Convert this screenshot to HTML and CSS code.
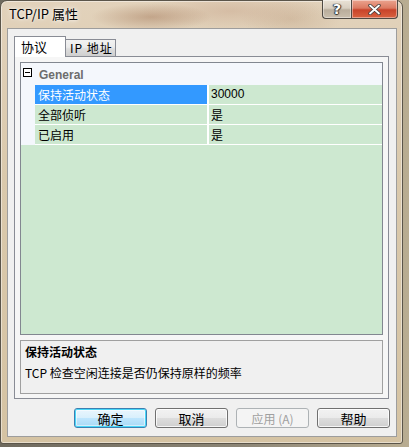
FILE: index.html
```html
<!DOCTYPE html>
<html lang="zh-CN">
<head>
  <meta charset="UTF-8" />
  <title>TCP/IP 属性</title>
  <link rel="stylesheet" href="styles.css">
</head>
<body>
  <div class="window">
    <div class="titlebar">
      <span class="title">TCP/IP 属性</span>
      <div class="caption-buttons">
        <div class="cap-btn help">?</div>
        <div class="cap-btn close">
          <svg width="13" height="11" viewBox="0 0 13 11">
            <path d="M2 1.5 L11 9.5 M11 1.5 L2 9.5" stroke="#3c3c3c" stroke-width="3.4" stroke-linecap="round"/>
            <path d="M2 1.5 L11 9.5 M11 1.5 L2 9.5" stroke="#fff" stroke-width="1.8" stroke-linecap="round"/>
          </svg>
        </div>
      </div>
    </div>

    <div class="client">
      <div class="tabs">
        <div class="tab active">协议</div>
        <div class="tab">IP 地址</div>
      </div>

      <div class="panel">
        <div class="grid">
          <div class="category">
            <span class="toggle"></span>
            <span class="cat-name">General</span>
          </div>
          <div class="row selected">
            <div class="name">保持活动状态</div>
            <div class="value">30000</div>
          </div>
          <div class="row">
            <div class="name">全部侦听</div>
            <div class="value">是</div>
          </div>
          <div class="row">
            <div class="name">已启用</div>
            <div class="value">是</div>
          </div>
          <div class="grid-fill"></div>
        </div>

        <div class="description">
          <div class="desc-title">保持活动状态</div>
          <div class="desc-text">TCP 检查空闲连接是否仍保持原样的频率</div>
        </div>
      </div>

      <div class="buttons">
        <button class="btn default">确定</button>
        <button class="btn">取消</button>
        <button class="btn disabled">应用 (A)</button>
        <button class="btn">帮助</button>
      </div>
    </div>
  </div>
</body>
</html>
```

FILE: styles.css
```css
body {
  margin: 0;
  padding: 0;
  width: 409px;
  height: 447px;
  overflow: hidden;
  background: linear-gradient(90deg, #6f6a5e 0%, #8d8676 60%, #b9ad92 100%);
  font-family: "Noto Sans CJK SC", "Liberation Sans", sans-serif;
  font-size: 12px;
  color: #000;
}

.window {
  border: 1px solid #5b554a;
  border-radius: 7px 7px 3px 3px;
  background:
    radial-gradient(ellipse 60px 14px at 150px 16px, rgba(170, 130, 100, 0.55), transparent),
    radial-gradient(ellipse 90px 18px at 230px 10px, rgba(205, 175, 150, 0.6), transparent),
    radial-gradient(ellipse 50px 20px at 290px 18px, rgba(190, 160, 130, 0.4), transparent),
    linear-gradient(180deg, #e2d2bb 0%, #dac9ac 40%, #d5c3a3 100%);
  box-shadow: inset 0 0 0 1px rgba(255, 255, 255, 0.45);
  display: flex;
  flex-direction: column;
  padding: 0 5px 6px 6px;
  box-sizing: border-box;
  width: 403px;
  height: 444px;
}

.titlebar {
  height: 27px;
  display: flex;
  align-items: flex-start;
  justify-content: space-between;
}

.title {
  margin: 5px 0 0 2px;
  font-size: 13px;
  line-height: 16px;
  text-shadow: 0 0 6px rgba(255, 255, 255, 0.9), 0 0 3px rgba(255, 255, 255, 0.9);
}

.caption-buttons {
  display: flex;
  margin-top: -1px;
  margin-right: -1px;
}

.cap-btn {
  height: 19px;
  border: 1px solid #4f4a44;
  border-top: none;
  box-sizing: border-box;
  display: flex;
  align-items: center;
  justify-content: center;
  box-shadow: inset 0 0 0 1px rgba(255, 255, 255, 0.4);
}

.help {
  width: 29px;
  border-right: none;
  border-radius: 0 0 0 4px;
  background: linear-gradient(180deg, #eae2d6 0%, #d9cfc1 45%, #b9ad9c 55%, #c9bead 100%);
  color: #fff;
  font-family: "DejaVu Sans", sans-serif;
  font-weight: bold;
  font-size: 14px;
  text-shadow: 0 0 1px #333, 1px 0 1px #333, -1px 0 1px #333, 0 1px 1px #333;
}

.close {
  width: 47px;
  border-radius: 0 0 4px 0;
  background: linear-gradient(180deg, #eba48f 0%, #dc7a62 45%, #c8432a 55%, #d9623f 100%);
}

.client {
  flex: 1;
  background: #f0f0f0;
  border: 1px solid #9d9d9d;
  display: flex;
  flex-direction: column;
  padding: 7px 6px 0 6px;
}

.tabs {
  display: flex;
  align-items: flex-end;
  height: 20px;
  position: relative;
  z-index: 1;
}

.tab {
  height: 17px;
  width: 50px;
  box-sizing: border-box;
  border: 1px solid #898c95;
  border-bottom: none;
  border-left: none;
  background: linear-gradient(180deg, #f2f2f2 0%, #ebebeb 45%, #dddddd 55%, #cfcfcf 100%);
  font-size: 12px;
  line-height: 16px;
  padding-left: 4px;
  letter-spacing: 1px;
  white-space: nowrap;
}

.tab.active {
  height: 21px;
  width: 52px;
  margin-bottom: -1px;
  border-left: 1px solid #898c95;
  background: #fff;
  font-size: 13px;
  line-height: 20px;
  padding-left: 6px;
  letter-spacing: 0;
}

.panel {
  width: 375px;
  height: 343px;
  box-sizing: border-box;
  border: 1px solid #898c95;
  background: #f6f6f6;
  padding: 5px 5px 4px 5px;
  display: flex;
  flex-direction: column;
  gap: 5px;
}

.grid {
  height: 273px;
  box-sizing: border-box;
  border: 1px solid #828790;
  background: #f4f7fc;
  display: flex;
  flex-direction: column;
}

.category {
  height: 22px;
  display: flex;
  align-items: center;
}

.toggle {
  width: 9px;
  height: 9px;
  border: 1px solid #000;
  box-sizing: border-box;
  margin: -3px 0 0 2px;
  position: relative;
  background: #fff;
}

.toggle::after {
  content: "";
  position: absolute;
  left: 1px;
  top: 3px;
  width: 5px;
  height: 1px;
  background: #000;
}

.cat-name {
  margin-left: 7px;
  font-family: "Liberation Sans", sans-serif;
  font-weight: bold;
  font-size: 12px;
  color: #6d6d6d;
  margin-top: 1px;
}

.row {
  height: 19px;
  display: flex;
  margin-left: 14px;
  border-bottom: 1px solid #fff;
}

.row .name,
.row .value {
  background: #cde8d0;
  line-height: 19px;
  padding-left: 3px;
}

.row .name {
  width: 169px;
  border-right: 2px solid #fff;
}

.row .value {
  flex: 1;
  padding-left: 2px;
}

.row.selected .name {
  background: #3399ff;
  color: #fff;
}

.row.selected .value {
  font-family: "Liberation Sans", sans-serif;
}

.grid-fill {
  flex: 1;
  background: #cde8d0;
}

.description {
  flex: 1;
  border: 1px solid #a0a0a0;
  background: #f0f0f0;
  padding: 2px 4px;
}

.desc-title {
  font-weight: bold;
  line-height: 18px;
}

.desc-text {
  margin-top: 3px;
  line-height: 18px;
}

.buttons {
  display: flex;
  justify-content: flex-end;
  gap: 8px;
  margin-top: 9px;
}

.btn {
  width: 73px;
  height: 20px;
  padding: 0;
  border: 1px solid #707070;
  border-radius: 3px;
  background: linear-gradient(180deg, #f2f2f2 0%, #ebebeb 48%, #dddddd 52%, #cfcfcf 100%);
  font-family: "Noto Sans CJK SC", sans-serif;
  font-size: 13px;
  line-height: 17px;
  color: #000;
  box-shadow: inset 0 0 0 1px rgba(255, 255, 255, 0.8);
}

.btn.default {
  border-color: #3c7fb1;
  box-shadow: inset 0 0 0 1px #48d7f8, inset 0 0 0 2px rgba(255, 255, 255, 0.5);
  background: linear-gradient(180deg, #eaf6fd 0%, #d9f0fc 48%, #bee6fd 52%, #a7d9f5 100%);
}

.btn.disabled {
  border-color: #adb2b5;
  background: #f4f4f4;
  color: #a0a0a0;
  font-size: 12px;
  box-shadow: none;
}
```
